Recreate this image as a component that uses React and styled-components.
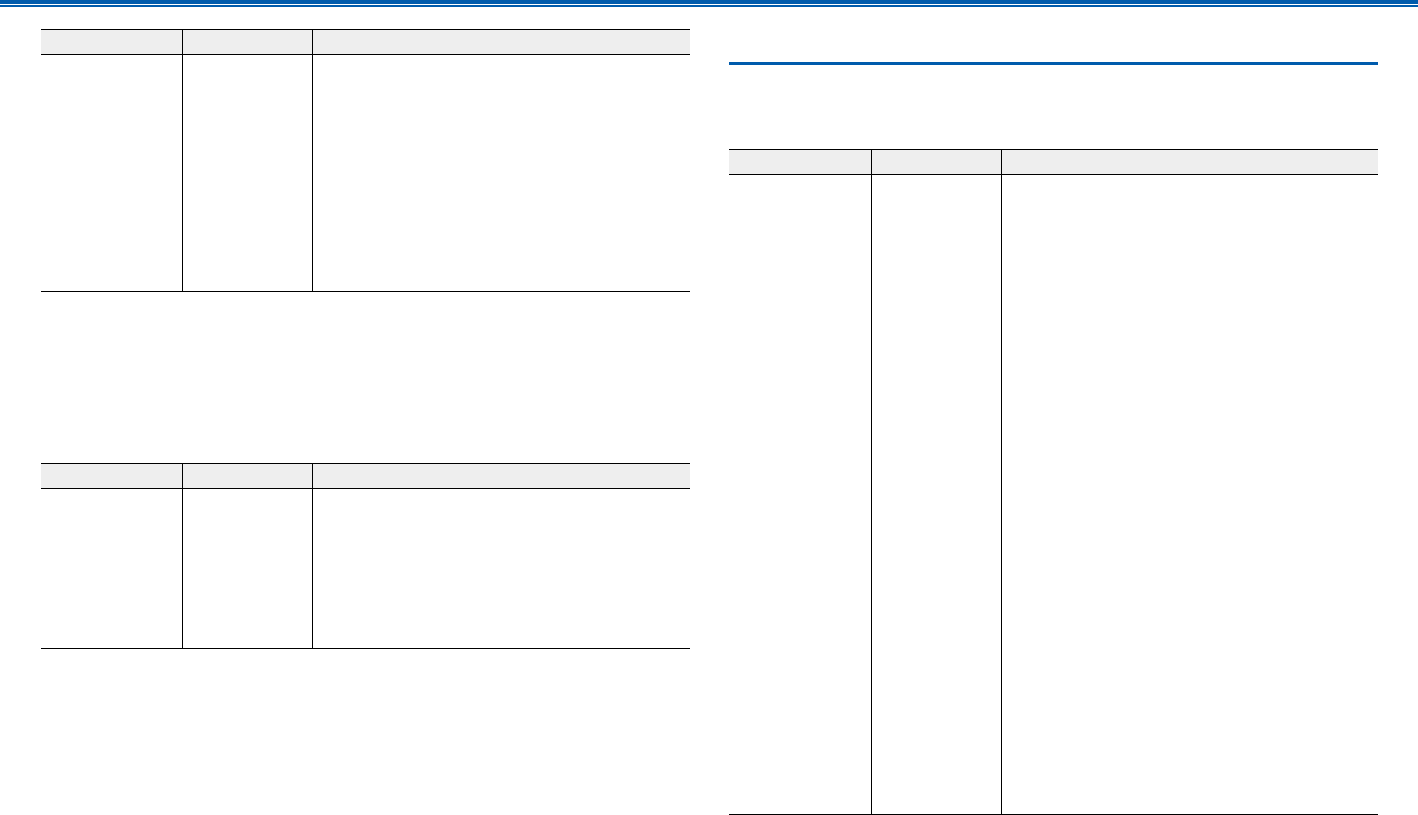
import React from "react";
import styled, { createGlobalStyle } from "styled-components";

const Global = createGlobalStyle`
  html, body { margin: 0; padding: 0; background: #fff; }
  body { font-family: "Liberation Sans", Arial, sans-serif; }
  * { box-sizing: border-box; }
`;

const TopBar = styled.header`
  height: 7px;
  border-top: 4px solid #005bac;
  border-bottom: 2px solid #005bac;
  background: #fff;
`;

const Page = styled.main`
  display: flex;
  gap: 39px;
  padding: 0 40px 0 41px;
`;

const Column = styled.section`
  width: 649px;
  display: flex;
  flex-direction: column;
  padding-top: ${(p) => p.$top}px;
`;

const SectionRule = styled.div`
  height: 3px;
  background: #005bac;
  margin-bottom: ${(p) => p.$after}px;
`;

const Table = styled.div`
  display: grid;
  grid-template-columns: ${(p) => p.$first}px 130px 1fr;
  border-top: 1px solid #000;
  border-bottom: 1px solid #000;
  margin-bottom: ${(p) => p.$after || 0}px;
`;

const HeadCell = styled.div`
  height: 25px;
  background: #eeeeee;
  border-bottom: 1px solid #000;
  border-left: ${(p) => (p.$divider ? "1px solid #000" : "none")};
`;

const BodyCell = styled.div`
  height: ${(p) => p.$h}px;
  border-left: ${(p) => (p.$divider ? "1px solid #000" : "none")};
`;

function SpecTable({ bodyHeight, first = 141, after }) {
  return (
    <Table $first={first} $after={after}>
      <HeadCell />
      <HeadCell $divider />
      <HeadCell $divider />
      <BodyCell $h={bodyHeight} />
      <BodyCell $h={bodyHeight} $divider />
      <BodyCell $h={bodyHeight} $divider />
    </Table>
  );
}

export default function App() {
  return (
    <>
      <Global />
      <TopBar />
      <Page>
        <Column $top={22}>
          <SpecTable bodyHeight={236} after={171} />
          <SpecTable bodyHeight={159} />
        </Column>
        <Column $top={55}>
          <SectionRule $after={84} />
          <SpecTable bodyHeight={639} first={142} />
        </Column>
      </Page>
    </>
  );
}
